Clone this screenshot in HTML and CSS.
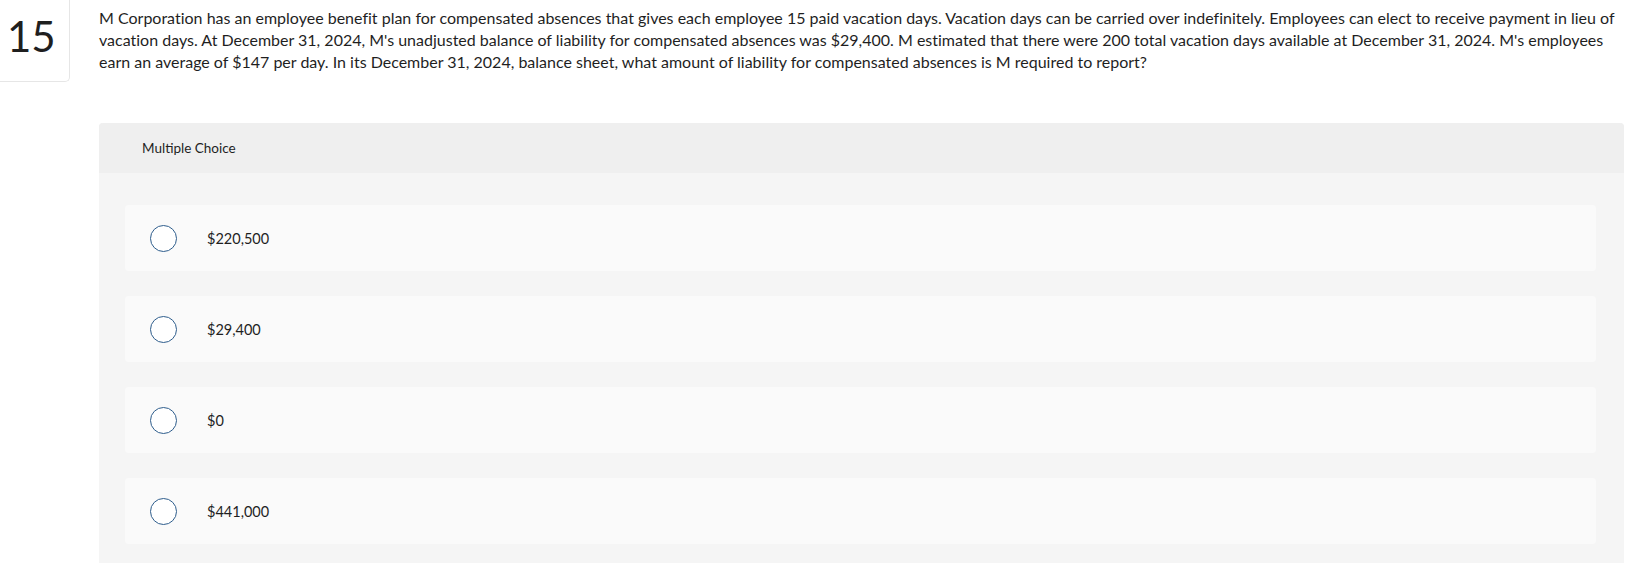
FILE: index.html
```html
<!DOCTYPE html>
<html>
<head>
<meta charset="utf-8">
<link rel="stylesheet" href="styles.css">
</head>
<body>
<div class="question">
  <div class="qnum">15</div>
  <p class="qtext">M Corporation has an employee benefit plan for compensated absences that gives each employee 15 paid vacation days. Vacation days can be carried over indefinitely. Employees can elect to receive payment in lieu of vacation days. At December 31, 2024, M's unadjusted balance of liability for compensated absences was $29,400. M estimated that there were 200 total vacation days available at December 31, 2024. M's employees earn an average of $147 per day. In its December 31, 2024, balance sheet, what amount of liability for compensated absences is M required to report?</p>
</div>
<div class="panel">
  <div class="panel-head">Multiple Choice</div>
  <div class="choices">
    <div class="choice"><span class="radio"></span><span class="label">$220,500</span></div>
    <div class="choice"><span class="radio"></span><span class="label">$29,400</span></div>
    <div class="choice"><span class="radio"></span><span class="label">$0</span></div>
    <div class="choice"><span class="radio"></span><span class="label">$441,000</span></div>
  </div>
</div>
</body>
</html>
```

FILE: styles.css
```css
html, body {
  margin: 0;
  padding: 0;
  background: #fff;
  font-family: Lato, "Open Sans", Arial, sans-serif;
  color: #1f1f1f;
}
.question {
  display: flex;
  align-items: flex-start;
}
.qnum {
  flex: 0 0 auto;
  width: 69px;
  height: 81px;
  border-right: 1px solid #e6e6e6;
  border-bottom: 1px solid #e6e6e6;
  border-bottom-right-radius: 5px;
  font-size: 42px;
  text-indent: 7px;
  line-height: 72px;
}
.qtext {
  margin: 7px 0 0 29px;
  width: 1525px;
  font-size: 16px;
  line-height: 22px;
  font-feature-settings: "liga" 0;
}
.panel {
  margin: 41px 12px 0 99px;
  background: #f5f5f5;
  border-radius: 4px 4px 0 0;
  padding-bottom: 30px;
}
.panel-head {
  height: 50px;
  background: #efefef;
  border-radius: 4px 4px 0 0;
  padding-left: 43px;
  display: flex;
  align-items: center;
  font-size: 13.5px;
}
.choices {
  padding: 32px 28px 0 26px;
  display: flex;
  flex-direction: column;
  gap: 25px;
}
.choice {
  height: 66px;
  background: #fafafa;
  border-radius: 4px;
  display: flex;
  align-items: center;
  padding-left: 25px;
}
.radio {
  width: 25px;
  height: 25px;
  border: 1.5px solid #2e5d8c;
  border-radius: 50%;
  background: #fff;
  flex: 0 0 auto;
}
.label {
  margin-left: 30px;
  font-size: 14.5px;
}
```
